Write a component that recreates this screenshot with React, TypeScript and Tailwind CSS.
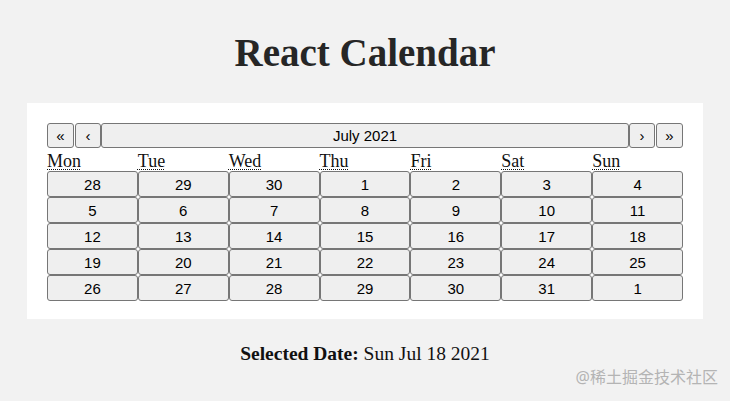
import React from "react";

const weeks = [
  [28, 29, 30, 1, 2, 3, 4],
  [5, 6, 7, 8, 9, 10, 11],
  [12, 13, 14, 15, 16, 17, 18],
  [19, 20, 21, 22, 23, 24, 25],
  [26, 27, 28, 29, 30, 31, 1],
];
const days = ["Mon", "Tue", "Wed", "Thu", "Fri", "Sat", "Sun"];

const btn =
  "bg-[#efefef] border border-[#767676] rounded-[3px] text-black text-[15px] leading-none flex items-center justify-center [font-family:'Liberation_Sans',Arial,sans-serif]";

export default function App() {
  return (
    <div className="relative w-[730px] h-[401px] bg-[#f2f2f2] overflow-hidden [font-family:'Liberation_Serif','Times_New_Roman',serif] text-[#222]">
      <h1 className="text-center font-bold text-[39px] leading-none pt-[33px] h-[103px] text-[#262626]">
        React Calendar
      </h1>
      <div className="mx-[27px] w-[676px] bg-white px-[20px] pt-[20px] pb-[18px]">
        <div className="flex h-[25px]">
          <button className={`${btn} w-[27px] h-[25px]`}>«</button>
          <button className={`${btn} w-[26px] h-[25px] ml-[1px]`}>‹</button>
          <button className={`${btn} flex-1 h-[25px]`}>July 2021</button>
          <button className={`${btn} w-[26px] h-[25px] mr-[1px]`}>›</button>
          <button className={`${btn} w-[27px] h-[25px]`}>»</button>
        </div>
        <div className="grid grid-cols-7 h-[22px] items-end">
          {days.map((d) => (
            <div key={d} className="text-[18px] leading-[18px] text-[#111]">
              <abbr className="underline decoration-dotted decoration-1 underline-offset-[2px]" title={d}>
                {d}
              </abbr>
            </div>
          ))}
        </div>
        <div className="grid grid-cols-7 pt-[1px]">
          {weeks.flat().map((n, i) => (
            <button key={i} className={`${btn} h-[26px]`}>
              {n}
            </button>
          ))}
        </div>
      </div>
      <div className="text-center text-[19.5px] text-[#111] mt-[20px]">
        <span className="font-bold">Selected Date:</span> Sun Jul 18 2021
      </div>
      <div className="absolute right-[12px] bottom-[12px] text-[16px] text-[#b4b4b4] [font-family:'Noto_Sans','Noto_Sans_CJK_SC',sans-serif]">
        @稀土掘金技术社区
      </div>
    </div>
  );
}
